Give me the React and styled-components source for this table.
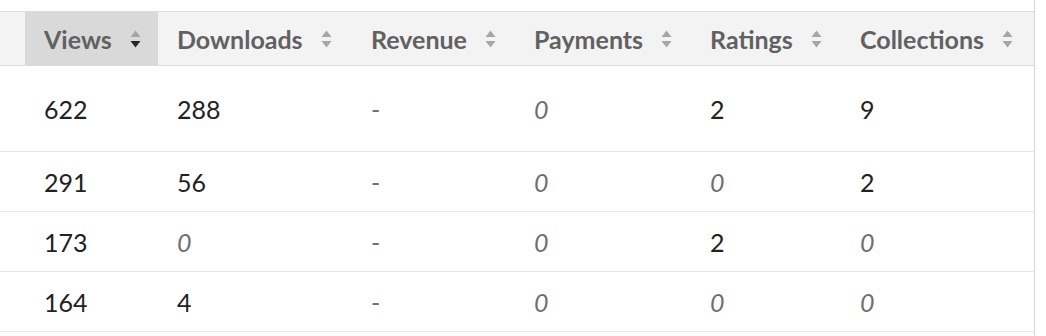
import React from "react";
import styled, { createGlobalStyle } from "styled-components";

const GlobalStyle = createGlobalStyle`
  html, body {
    margin: 0;
    padding: 0;
    background: #fff;
    overflow: hidden;
  }

  body {
    font-family: Lato, "Open Sans", sans-serif;
  }
`;

const TableWrpr = styled.div`
  width: 1035px;
  min-height: 100vh;
  padding-top: 11px;
  box-sizing: border-box;
  border-right: 1px solid #d6d6d6;
`;

const StyledTable = styled.table`
  width: 1034px;
  border-collapse: collapse;
  table-layout: fixed;
`;

const HeadRow = styled.tr`
  background-color: #f3f3f3;
  border-top: 1px solid #dcdcdc;
  border-bottom: 1px solid #dcdcdc;
`;

const HeadCell = styled.th`
  height: 54px;
  padding: 0 19px;
  box-sizing: border-box;
  text-align: left;
  white-space: nowrap;
  background-color: ${({ $sorted }) => ($sorted ? "#d9d9d9" : "transparent")};

  color: #616161;
  font-family: Lato, sans-serif;
  font-weight: 700;
  font-size: 25px;
`;

const HeadInner = styled.span`
  display: inline-flex;
  align-items: center;
  gap: 18px;
`;

const BodyRow = styled.tr`
  height: ${({ $tall }) => ($tall ? "86px" : "60px")};
  border-bottom: 1px solid #e9e9e9;
`;

const Cell = styled.td`
  padding: 0 19px;
  white-space: nowrap;

  color: ${({ $muted }) => ($muted ? "#6f6f6f" : "#222")};
  font-family: Lato, sans-serif;
  font-style: ${({ $italic }) => ($italic ? "italic" : "normal")};
  font-size: 25px;
`;

const SortIcon = ({ active }) => (
  <svg width="11" height="18" viewBox="0 0 11 18" aria-hidden="true">
    <path d="M5.5 0.5 L10.5 7 L0.5 7 Z" fill="#a6a6a6" />
    <path d="M0.5 11 L10.5 11 L5.5 17.5 Z" fill={active ? "#262626" : "#a6a6a6"} />
  </svg>
);

const columns = [
  { key: "views", label: "Views", width: 133 },
  { key: "downloads", label: "Downloads", width: 194 },
  { key: "revenue", label: "Revenue", width: 163 },
  { key: "payments", label: "Payments", width: 176 },
  { key: "ratings", label: "Ratings", width: 150 },
  { key: "collections", label: "Collections", width: 193 },
];

const rows = [
  { views: 622, downloads: 288, revenue: "-", payments: 0, ratings: 2, collections: 9 },
  { views: 291, downloads: 56, revenue: "-", payments: 0, ratings: 0, collections: 2 },
  { views: 173, downloads: 0, revenue: "-", payments: 0, ratings: 2, collections: 0 },
  { views: 164, downloads: 4, revenue: "-", payments: 0, ratings: 0, collections: 0 },
];

export default function App() {
  return (
    <>
      <GlobalStyle />
      <TableWrpr>
        <StyledTable>
          <colgroup>
            <col style={{ width: 25 }} />
            {columns.map((c) => (
              <col key={c.key} style={{ width: c.width }} />
            ))}
          </colgroup>
          <thead>
            <HeadRow>
              <HeadCell />
              {columns.map((c) => (
                <HeadCell key={c.key} $sorted={c.key === "views"}>
                  <HeadInner>
                    {c.label}
                    <SortIcon active={c.key === "views"} />
                  </HeadInner>
                </HeadCell>
              ))}
            </HeadRow>
          </thead>
          <tbody>
            {rows.map((r, i) => (
              <BodyRow key={i} $tall={i === 0}>
                <Cell />
                {columns.map((c) => {
                  const v = r[c.key];
                  const zero = v === 0 && c.key !== "views";
                  const dash = v === "-";
                  return (
                    <Cell key={c.key} $muted={zero || dash} $italic={zero}>
                      {v}
                    </Cell>
                  );
                })}
              </BodyRow>
            ))}
          </tbody>
        </StyledTable>
      </TableWrpr>
    </>
  );
}
